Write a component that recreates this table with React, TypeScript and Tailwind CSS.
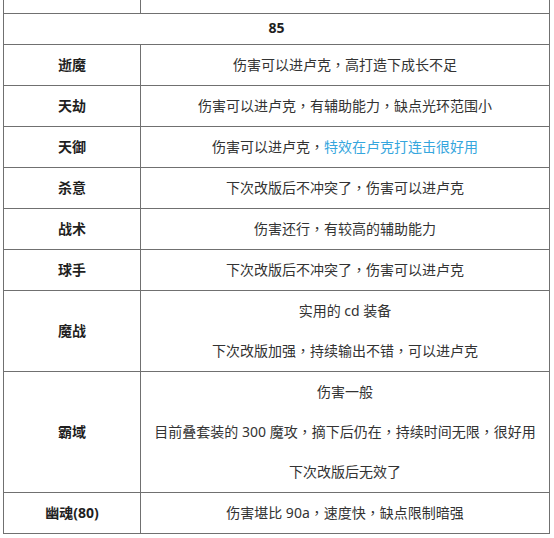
import { Fragment, type ReactNode } from "react";

// full-width commas sit in the middle of their box in the reference, like the TC font draws them
const withCommas = (text: string): ReactNode =>
  text.split("，").map((part, i) => (
    <Fragment key={i}>
      {i > 0 && <span className="font-['Noto_Sans_CJK_TC',sans-serif] leading-none">，</span>}
      {part}
    </Fragment>
  ));

const rows: { name: string; lines: ReactNode[] }[] = [
  { name: "逝魔", lines: [withCommas("伤害可以进卢克，高打造下成长不足")] },
  { name: "天劫", lines: [withCommas("伤害可以进卢克，有辅助能力，缺点光环范围小")] },
  {
    name: "天御",
    lines: [
      <>
        {withCommas("伤害可以进卢克，")}
        <span className="text-[#35a6dd]">特效在卢克打连击很好用</span>
      </>,
    ],
  },
  { name: "杀意", lines: [withCommas("下次改版后不冲突了，伤害可以进卢克")] },
  { name: "战术", lines: [withCommas("伤害还行，有较高的辅助能力")] },
  { name: "球手", lines: [withCommas("下次改版后不冲突了，伤害可以进卢克")] },
  {
    name: "魔战",
    lines: ["实用的 cd 装备", withCommas("下次改版加强，持续输出不错，可以进卢克")],
  },
  {
    name: "霸域",
    lines: [
      "伤害一般",
      withCommas("目前叠套装的 300 魔攻，摘下后仍在，持续时间无限，很好用"),
      "下次改版后无效了",
    ],
  },
  { name: "幽魂(80)", lines: [withCommas("伤害堪比 90a，速度快，缺点限制暗强")] },
];

const cell = "border border-[#707070] p-0 text-center align-middle";

export default function App() {
  return (
    <div className="min-h-[538px] bg-white pl-[3px] font-['Noto_Sans','Noto_Sans_CJK_SC',sans-serif] text-[14px] text-[#333333]">
      <table className="w-[547px] table-fixed border-collapse">
        <colgroup>
          <col className="w-[137px]" />
          <col />
        </colgroup>
        <tbody>
          <tr>
            <td className={`${cell} h-[13px] border-t-0`} />
            <td className={`${cell} h-[13px] border-t-0`} />
          </tr>
          <tr>
            <td colSpan={2} className={`${cell} h-[31px] pb-[3px] font-bold text-[#1f1f1f]`}>
              85
            </td>
          </tr>
          {rows.map((r) => (
            <tr key={r.name}>
              <td className={`${cell} font-bold text-[#1f1f1f]`}>{r.name}</td>
              <td className={cell}>
                {r.lines.map((l, i) => (
                  <div key={i} className="h-[40px] leading-[40px]">
                    {l}
                  </div>
                ))}
              </td>
            </tr>
          ))}
        </tbody>
      </table>
    </div>
  );
}
